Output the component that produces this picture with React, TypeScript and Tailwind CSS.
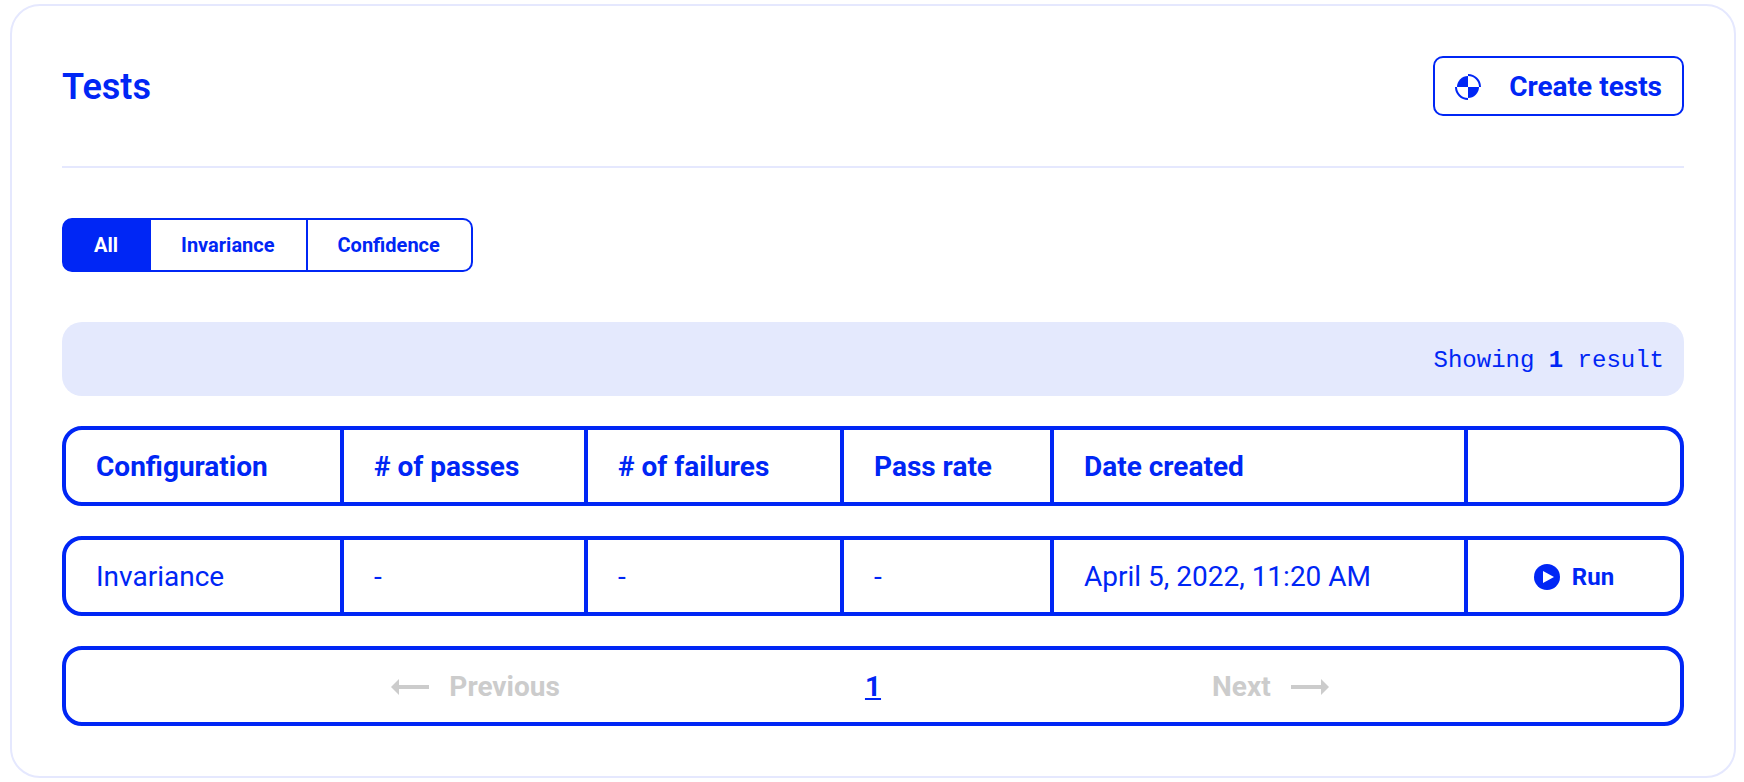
import React from "react";

const columns = [
  { label: "Configuration", width: "w-[282px]" },
  { label: "# of passes", width: "w-[244px]" },
  { label: "# of failures", width: "w-[256px]" },
  { label: "Pass rate", width: "w-[210px]" },
  { label: "Date created", width: "w-[414px]" },
  { label: "", width: "w-[216px]" },
];

const tests = [
  {
    configuration: "Invariance",
    passes: "-",
    failures: "-",
    passRate: "-",
    createdAt: "April 5, 2022, 11:20 AM",
  },
];

const filters = ["All", "Invariance", "Confidence"];

const cell =
  "h-20 border-y-4 border-r-4 border-[#0026f5] px-[30px] pt-0.5 text-left first:rounded-l-[20px] first:border-l-4 last:rounded-r-[20px]";

const TestsIcon = () => (
  <svg width="26" height="26" viewBox="0 0 26 26" fill="currentColor" aria-hidden="true">
    <path d="M13 13V2A11 11 0 0 0 2 13Z" />
    <path d="M13 13V24A11 11 0 0 0 24 13Z" />
    <path d="M13 0A13 13 0 0 1 26 13H24A11 11 0 0 0 13 2Z" />
    <path d="M13 26A13 13 0 0 1 0 13H2A11 11 0 0 0 13 24Z" />
  </svg>
);

const PlayIcon = () => (
  <svg width="26" height="26" viewBox="0 0 26 26" aria-hidden="true">
    <circle cx="13" cy="13" r="13" fill="currentColor" />
    <path d="M9 7V19L20 13Z" fill="white" />
  </svg>
);

const ArrowIcon = ({ className }: { className?: string }) => (
  <svg
    width="38"
    height="16"
    viewBox="0 0 38 16"
    fill="currentColor"
    className={className}
    aria-hidden="true"
  >
    <path d="M0 6H30V0L38 8L30 16V10H0Z" />
  </svg>
);

const Filters = () => {
  const [active, setActive] = React.useState("All");

  return (
    <div className="flex h-[54px]">
      {filters.map((name) => (
        <button
          key={name}
          onClick={() => setActive(name)}
          aria-pressed={active === name}
          className={`border-y-2 border-r-2 border-[#0026f5] pr-[31px] pl-[30px] text-[20px] font-bold first:rounded-l-[10px] first:border-l-2 last:rounded-r-[10px] ${
            active === name ? "bg-[#0026f5] text-white" : ""
          }`}
        >
          {name}
        </button>
      ))}
    </div>
  );
};

const TestsTable = () => (
  <table className="w-full table-fixed border-separate border-spacing-x-0 border-spacing-y-[30px] text-[28px] leading-9">
    <thead>
      <tr>
        {columns.map(({ label, width }) => (
          <th key={label} className={`${cell} ${width} font-bold`}>
            {label}
          </th>
        ))}
      </tr>
    </thead>
    <tbody>
      {tests.map((test) => (
        <tr key={test.createdAt}>
          <td className={cell}>{test.configuration}</td>
          <td className={cell}>{test.passes}</td>
          <td className={cell}>{test.failures}</td>
          <td className={cell}>{test.passRate}</td>
          <td className={cell}>{test.createdAt}</td>
          <td className={cell}>
            <button className="mx-auto flex items-center gap-3 text-[24px] font-bold">
              <PlayIcon />
              Run
            </button>
          </td>
        </tr>
      ))}
    </tbody>
  </table>
);

const Pagination = () => (
  <nav className="grid h-20 grid-cols-3 items-center justify-items-center rounded-[20px] border-4 border-[#0026f5] px-[13%] pt-0.5 text-[28px] font-bold">
    <button disabled className="flex items-center gap-5 text-[#cccccc]">
      <ArrowIcon className="rotate-180" />
      Previous
    </button>
    <a href="#1" className="underline decoration-2 underline-offset-2">
      1
    </a>
    <button disabled className="flex items-center gap-5 text-[#cccccc]">
      Next
      <ArrowIcon />
    </button>
  </nav>
);

const App = () => {
  return (
    <main className="mt-1 mr-2 mb-1 ml-2.5 rounded-[30px] border-2 border-[#e5e8fe] bg-white p-[50px] font-['Roboto',sans-serif] text-[#0026f5]">
      <header className="flex items-center justify-between border-b-2 border-[#e5e8fe] pb-[50px]">
        <h1 className="pt-0.5 text-[36px] font-semibold">Tests</h1>
        <button className="flex h-[60px] items-center gap-7 rounded-[10px] border-2 border-[#0026f5] px-5 pt-0.5 text-[28px] font-bold">
          <TestsIcon />
          Create tests
        </button>
      </header>

      <div className="my-[50px]">
        <Filters />
      </div>

      <div className="flex h-[74px] items-center justify-end rounded-[20px] bg-[#e4e9fd] px-5 pt-1 font-['Liberation_Mono',monospace] text-[24px]">
        <p>
          Showing <strong>1</strong> result
        </p>
      </div>

      <TestsTable />
      <Pagination />
    </main>
  );
};

export default App;
